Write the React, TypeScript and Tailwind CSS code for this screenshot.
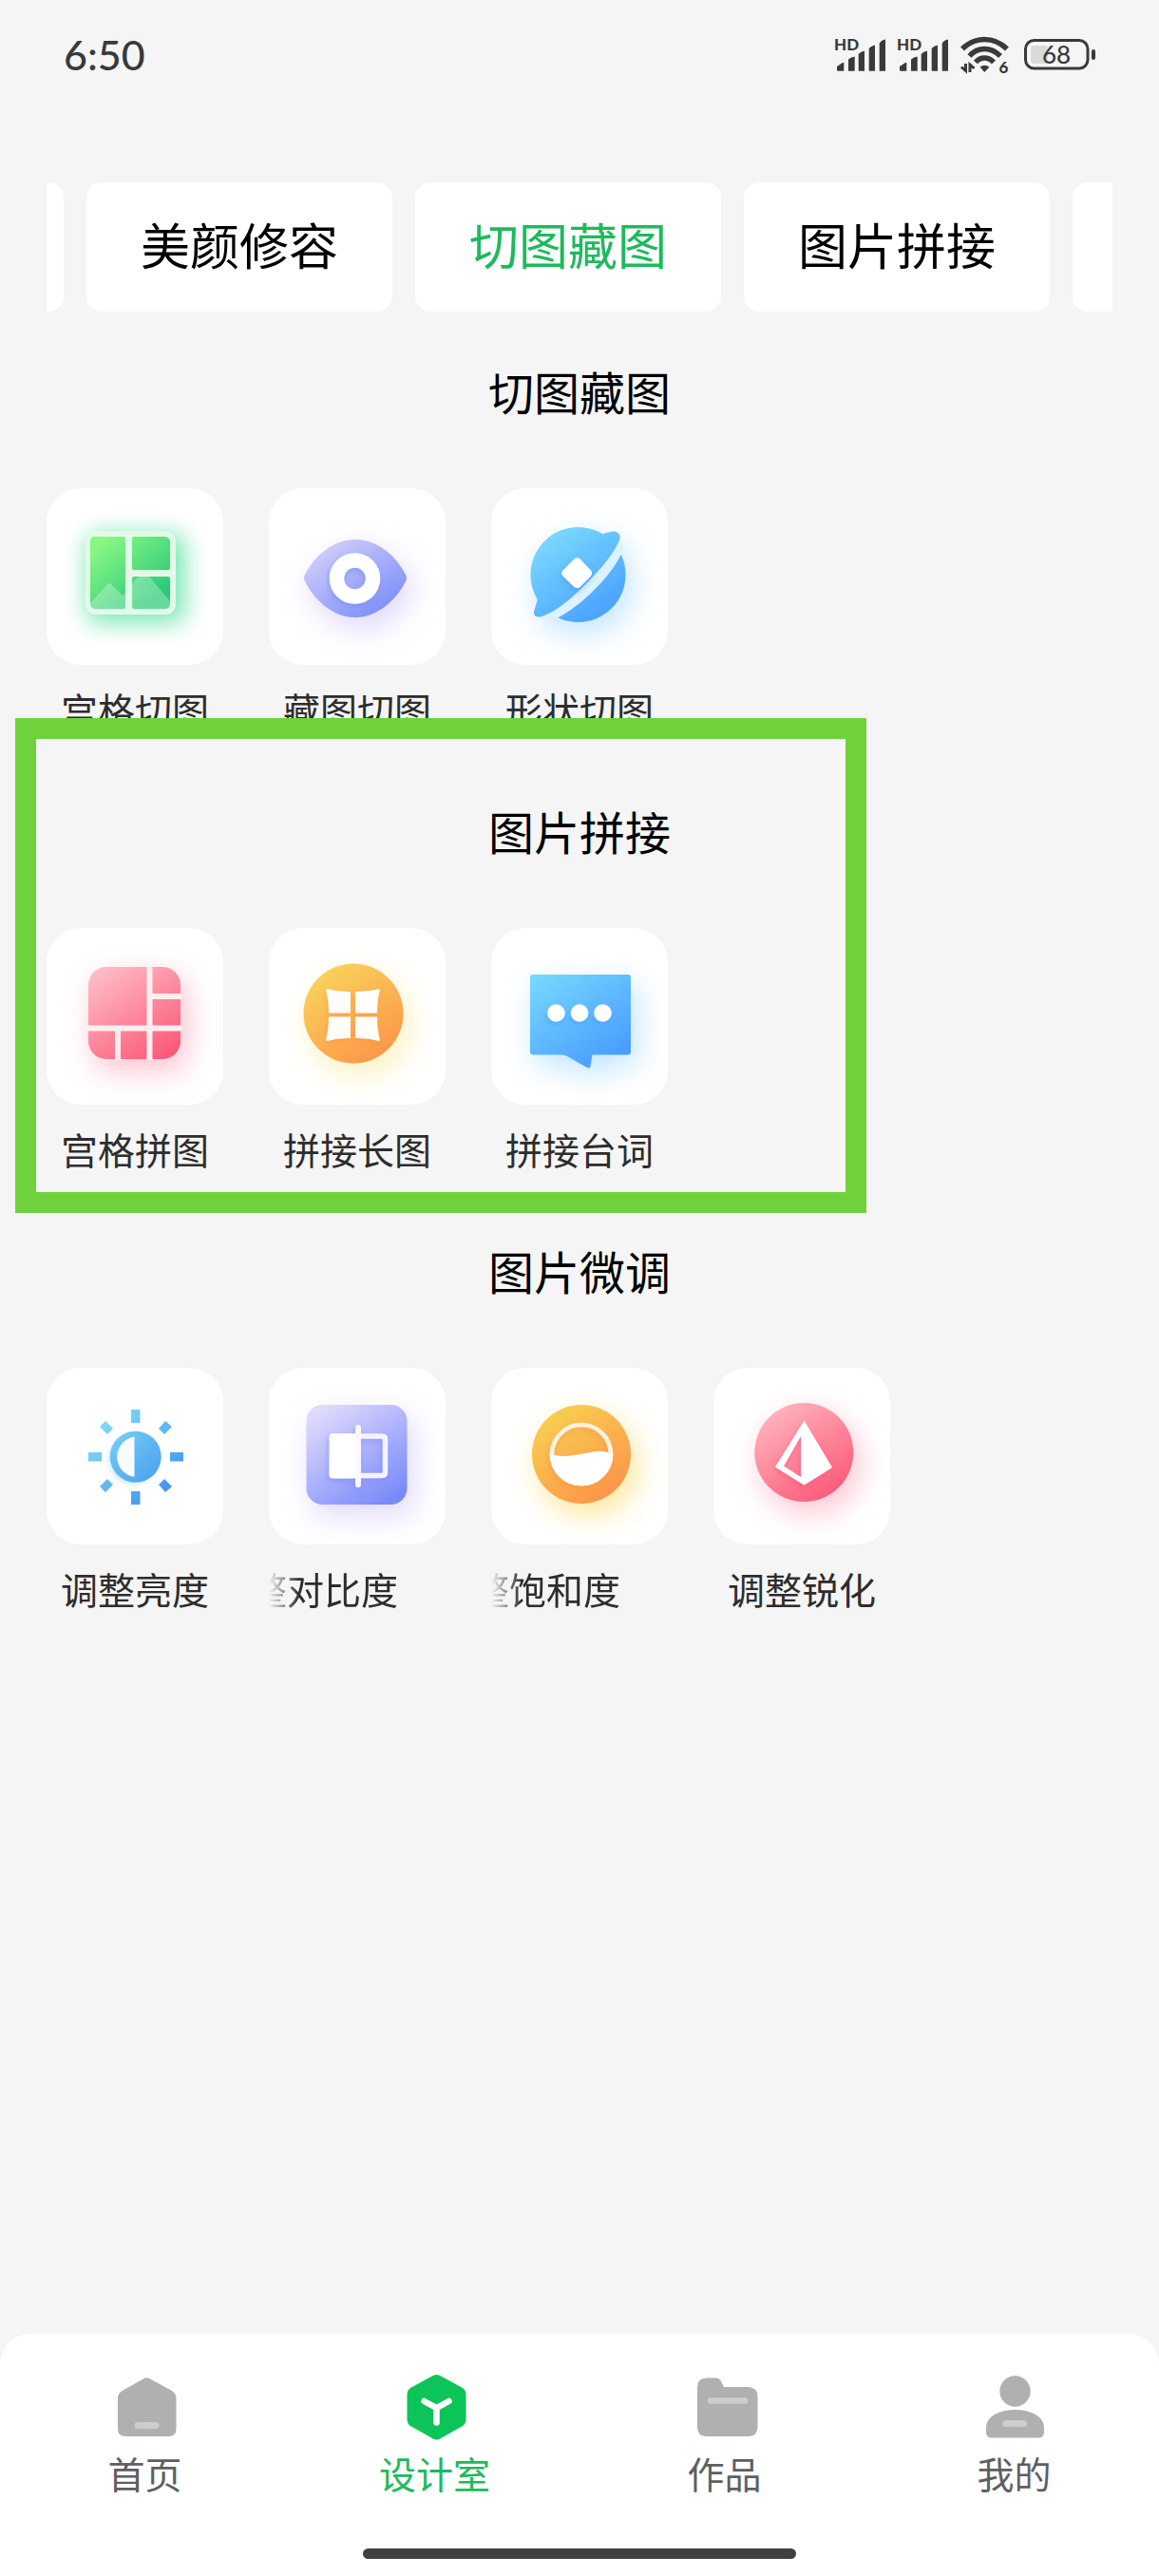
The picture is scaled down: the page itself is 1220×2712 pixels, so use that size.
import { useLayoutEffect, useRef, useState } from 'react';
import type { ReactNode } from 'react';

interface Tool {
  label: string;
  icon: ReactNode;
}

interface Section {
  title: string;
  tools: Tool[];
  highlighted?: boolean;
}

const TABS = ['图片美化', '美颜修容', '切图藏图', '图片拼接', '图片微调'];
const TAB_SCROLL = 304;

const MAX_LABEL = 4;

// --- Tool icons (drawn on a 186 x 186 tile) ---

interface GlowIconProps {
  id: string;
  from: string;
  to: string;
  glow: string;
  glowOpacity?: number;
  shape: ReactNode;
  children?: ReactNode;
}

/** Gradient shape with a soft coloured glow below and to the right of it */
function GlowIcon({ id, from, to, glow, glowOpacity = 0.55, shape, children }: GlowIconProps) {
  return (
    <svg viewBox="0 0 186 186" className="block size-full" aria-hidden="true">
      <defs>
        <linearGradient id={`${id}-fill`} gradientUnits="userSpaceOnUse" x1="56" y1="44" x2="124" y2="142">
          <stop offset="0" stopColor={from} />
          <stop offset="1" stopColor={to} />
        </linearGradient>
        <filter id={`${id}-blur`} x="-60%" y="-60%" width="220%" height="220%">
          <feGaussianBlur stdDeviation="16" />
        </filter>
        <filter id={`${id}-shade`} x="-30%" y="-30%" width="160%" height="160%">
          <feDropShadow dx="-1" dy="3" stdDeviation="3" floodColor={to} floodOpacity="0.6" />
        </filter>
      </defs>
      <g fill={glow} opacity={glowOpacity} transform="translate(7 12)" filter={`url(#${id}-blur)`}>
        {shape}
      </g>
      <g fill={`url(#${id}-fill)`}>{shape}</g>
      {children}
    </svg>
  );
}

function GridCutIcon() {
  return (
    <svg viewBox="0 0 186 186" className="block size-full" aria-hidden="true">
      <defs>
        <linearGradient id="cut-fill" gradientUnits="userSpaceOnUse" x1="60" y1="56" x2="112" y2="118">
          <stop offset="0" stopColor="#8af684" />
          <stop offset="1" stopColor="#2bca79" />
        </linearGradient>
        <filter id="cut-blur" x="-50%" y="-50%" width="200%" height="200%">
          <feGaussianBlur stdDeviation="12" />
        </filter>
      </defs>
      <rect x="42" y="48" width="104" height="94" rx="12" fill="#35dc8c" opacity="0.66" filter="url(#cut-blur)" />
      <rect x="41" y="45" width="95" height="88" rx="11" fill="#e2fbe9" />
      <g fill="url(#cut-fill)">
        <path d="M51 51H81Q83 51 83 53V125Q83 127 81 127H52Q46 127 46 121V56Q46 51 51 51Z" />
        <path d="M92 51H124Q130 51 130 57V84Q130 86 128 86H92Q90 86 90 84V53Q90 51 92 51Z" />
        <path d="M92 93H128Q130 93 130 95V121Q130 127 124 127H92Q90 127 90 125V95Q90 93 92 93Z" />
      </g>
      <g fill="#ffffff" opacity="0.28">
        <path d="M46 121L64 101Q66 99 68 101L79 112Q81 113 83 110V125Q83 127 81 127H52Q46 127 46 121Z" />
        <path d="M90 100L97 93H108L130 119V121Q130 127 124 127H92Q90 127 90 125Z" />
      </g>
    </svg>
  );
}

function EyeIcon() {
  return (
    <GlowIcon
      id="eye"
      from="#dcd7fb"
      to="#7588f8"
      glow="#c6b6fb"
      shape={<path d="M38 98Q36 95 38 91C48 71 68 54 91 54S134 71 144 91Q146 95 144 98C134 118 114 136 91 136S48 118 38 98Z" />}
    >
      <circle cx="90.500" cy="95" r="19" fill="none" stroke="#ffffff" strokeWidth="15.500" filter="url(#eye-shade)" />
    </GlowIcon>
  );
}

function PlanetIcon() {
  return (
    <GlowIcon
      id="planet"
      from="#7ddcff"
      to="#459cff"
      glow="#8fd0ff"
      shape={
        <>
          <circle cx="91.500" cy="91" r="50" />
          <path d="M116 49Q124 45 130 45.500Q137 47 135.500 54C131 68 119 81 106 94.500S74 128 52 135.500Q44 136 45 130L50 113Z" />
        </>
      }
    >
      <path
        d="M136 52C131 66 119 81 106 94.300S74 128 51 136.500L69 137C84 129 95 120 105 110.500S131 84 139 65Z"
        fill="#ddf2ff"
      />
      <path
        d="M87.500 74.500Q90.500 72 93.500 74.500L105 86.500Q107 89.500 105 92.500L93.500 104Q90.500 106 87.500 104L75.500 92.500Q73 89.500 75.500 86.500Z"
        fill="#ffffff"
        filter="url(#planet-shade)"
      />
    </GlowIcon>
  );
}

function GridJoinIcon() {
  return (
    <GlowIcon
      id="join"
      from="#ffbcc6"
      to="#fa5675"
      glow="#ff8fa6"
      shape={<rect x="44" y="41" width="97" height="97" rx="19" />}
    >
      <path d="M108.500 40V139M43 105.500H142M108.500 72H142M75 105.500V139" stroke="#ffeef1" strokeWidth="6" fill="none" />
    </GlowIcon>
  );
}

function LongImageIcon() {
  const pane = 'M61 64Q73 67.500 86 67V89.500H63Q63 76 60 65Z';
  return (
    <GlowIcon
      id="long"
      from="#f9d35c"
      to="#fd9347"
      glow="#ffe68a"
      shape={<circle cx="89" cy="90" r="52.500" />}
    >
      <g fill="#fffefa" filter="url(#long-shade)">
        <path d={pane} />
        <path d={pane} transform="matrix(-1 0 0 1 177 0)" />
        <path d={pane} transform="matrix(1 0 0 -1 0 183)" />
        <path d={pane} transform="matrix(-1 0 0 -1 177 183)" />
      </g>
    </GlowIcon>
  );
}

function CaptionIcon() {
  return (
    <GlowIcon
      id="caption"
      from="#78d8fe"
      to="#489dff"
      glow="#8fd0ff"
      shape={
        <path d="M44 49H144Q147 49 147 52V130Q147 133.500 144 133.500H106.500L104.500 146Q104 148 101 147L80 135Q78 133.500 74 133.500H44Q41 133.500 41 130V52Q41 49 44 49Z" />
      }
    >
      <g fill="#ffffff" filter="url(#caption-shade)">
        <circle cx="68.500" cy="89.500" r="9.300" />
        <circle cx="93" cy="89.500" r="9.300" />
        <circle cx="117.500" cy="89.500" r="9.300" />
      </g>
    </GlowIcon>
  );
}

function BrightnessIcon() {
  return (
    <svg viewBox="0 0 186 186" className="block size-full" aria-hidden="true">
      <defs>
        <linearGradient id="sun-fill" gradientUnits="userSpaceOnUse" x1="58" y1="58" x2="130" y2="130">
          <stop offset="0" stopColor="#80d9f6" />
          <stop offset="1" stopColor="#4095ec" />
        </linearGradient>
        <filter id="sun-blur" x="-30%" y="-30%" width="160%" height="160%">
          <feGaussianBlur stdDeviation="3" />
        </filter>
      </defs>
      <circle cx="91" cy="97" r="25" fill="#8ccbfa" opacity="0.5" filter="url(#sun-blur)" />
      <circle cx="93.700" cy="93.700" r="27" fill="url(#sun-fill)" />
      <path d="M92.500 72.500A21.500 21.500 0 0 0 92.500 115Z" fill="#f8fcff" />
      <g fill="url(#sun-fill)">
        <path d="M89 44H98.500V58H89ZM89 130H98.500V144H89ZM44 89H58V98.500H44ZM130 89H144V98.500H130Z" />
        <path d="M62 56L70 64L64 70L56 62ZM125 56L132 62L124 70L118 64ZM62 131L70 123L64 117L56 125ZM125 131L132 125L124 117L118 123Z" />
      </g>
    </svg>
  );
}

function ContrastIcon() {
  return (
    <GlowIcon
      id="contrast"
      from="#dfdafc"
      to="#7a8afa"
      glow="#b3a6fb"
      glowOpacity={0.42}
      shape={<rect x="39.500" y="39" width="106" height="105" rx="17" />}
    >
      <g filter="url(#contrast-shade)">
        <rect x="63.500" y="69" width="31" height="47.500" rx="4" fill="#ffffff" />
        <path d="M95 72H119Q122.500 72 122.500 75.500V110Q122.500 113.500 119 113.500H95" fill="none" stroke="#f4f3ff" strokeWidth="5.500" />
        <path d="M94 63V123" stroke="#f9f8ff" strokeWidth="6" strokeLinecap="round" />
      </g>
    </GlowIcon>
  );
}

function SaturationIcon() {
  return (
    <GlowIcon
      id="saturation"
      from="#f8d251"
      to="#fc934a"
      glow="#ffda62"
      glowOpacity={0.65}
      shape={<circle cx="95" cy="91" r="52" />}
    >
      <g filter="url(#saturation-shade)">
        <circle cx="95" cy="91" r="31" fill="none" stroke="#fff2db" strokeWidth="4.700" />
        <path d="M61.700 91Q74 94.500 88 92T110 88T128.300 91A33.300 33.300 0 0 1 61.700 91Z" fill="#ffffff" />
      </g>
    </GlowIcon>
  );
}

function SharpenIcon() {
  return (
    <GlowIcon
      id="sharpen"
      from="#ffb6bf"
      to="#fd5676"
      glow="#ff94ab"
      shape={<circle cx="95.300" cy="89" r="52" />}
    >
      <path
        d="M95.500 55.500L125 105L95.500 123.500L65 104.500ZM92 72L74 103.500L92 115Z"
        fill="#ffffff"
        fillRule="evenodd"
        filter="url(#sharpen-shade)"
      />
    </GlowIcon>
  );
}

const SECTIONS: Section[] = [
  {
    title: '切图藏图',
    tools: [
      { label: '宫格切图', icon: <GridCutIcon /> },
      { label: '藏图切图', icon: <EyeIcon /> },
      { label: '形状切图', icon: <PlanetIcon /> },
    ],
  },
  {
    title: '图片拼接',
    highlighted: true,
    tools: [
      { label: '宫格拼图', icon: <GridJoinIcon /> },
      { label: '拼接长图', icon: <LongImageIcon /> },
      { label: '拼接台词', icon: <CaptionIcon /> },
    ],
  },
  {
    title: '图片微调',
    tools: [
      { label: '调整亮度', icon: <BrightnessIcon /> },
      { label: '调整对比度', icon: <ContrastIcon /> },
      { label: '调整饱和度', icon: <SaturationIcon /> },
      { label: '调整锐化', icon: <SharpenIcon /> },
    ],
  },
];

// --- Bottom navigation ---

const NAV_ITEMS = [
  {
    label: '首页',
    icon: (
      <>
        <path
          d="M31 5Q35.500 1.500 40 5L62 17Q66.500 20 66.500 25V57Q66.500 65 58.500 65H13Q5 65 5 57V25Q5 20 9.500 17Z"
          fill="#b0b0b0"
        />
        <path d="M26 53.500H45" stroke="#cdcdcd" strokeWidth="7" strokeLinecap="round" />
      </>
    ),
  },
  {
    label: '设计室',
    icon: (
      <>
        <path
          d="M31 1.500Q35.500 -1.500 40 1.500L63 14Q66.500 16.500 66.500 21V47Q66.500 51.500 63 54L40 67Q35.500 70 31 67L8 54Q4.500 51.500 4.500 47V21Q4.500 16.500 8 14Z"
          fill="#0cc458"
        />
        <path d="M22.500 28L35.500 35L48.500 28M35.500 35V50.500" fill="none" stroke="#ffffff" strokeWidth="6.500" strokeLinecap="round" />
      </>
    ),
  },
  {
    label: '作品',
    icon: (
      <>
        <path
          d="M15 3.500H25Q28 3.500 29.500 6L33 13H58Q68.500 13 68.500 23V55Q68.500 65 58 65H15Q5 65 5 55V13.500Q5 3.500 15 3.500Z"
          fill="#b0b0b0"
        />
        <path d="M19 27.500H55" stroke="#cdcdcd" strokeWidth="6.500" strokeLinecap="round" />
      </>
    ),
  },
  {
    label: '我的',
    icon: (
      <>
        <circle cx="34.500" cy="17.500" r="16.200" fill="#b0b0b0" />
        <path
          d="M4 56C4 44 18 37 34.500 37S65 44 65 56V60.500Q65 66.500 59 66.500H10Q4 66.500 4 60.500Z"
          fill="#b0b0b0"
        />
        <path d="M25 51.500H43.500" stroke="#cdcdcd" strokeWidth="7" strokeLinecap="round" />
      </>
    ),
  },
];

// --- Status bar ---

function SignalIcon() {
  return (
    <svg viewBox="0 0 54 44" className="h-11 w-[54px] overflow-visible" fill="#3a3a3a" aria-hidden="true">
      <text x="-1" y="17.300" fontSize="17" fontWeight="900" fontFamily="Lato, sans-serif">
        HD
      </text>
      <path d="M2 34L8 30H9.300V38.700H3Q2 38.700 2 37.700ZM14 26.500Q17 24 20.700 23.500V38.700H14ZM24.700 21Q27 18 31 17.500V38.700H24.700ZM35.700 15Q38 12 42 11.500V38.700H35.700ZM46.700 9.500Q49 6 53 5.500V38.700H46.700Z" />
    </svg>
  );
}

function WifiIcon() {
  return (
    <svg viewBox="0 0 54 44" className="h-11 w-[54px] overflow-visible" fill="none" stroke="#3a3a3a" aria-hidden="true">
      <path d="M2 15.500Q12 5.500 25.300 5.500T49 15.500" strokeWidth="5.500" />
      <path d="M9.500 23Q16 15.500 25.300 15.500T42 23" strokeWidth="5.500" />
      <path d="M16 29.500Q20 25 25.300 25T35 29.500" strokeWidth="5.500" />
      <path d="M20.500 34.500Q25.300 31 30.500 34.500L25.300 40Z" fill="#3a3a3a" stroke="none" />
      <path d="M1 34.500L5.500 38.500V31M10 40V32L14.500 36" strokeWidth="3" />
      <text x="40.500" y="40.500" fontSize="17" fontWeight="900" fontFamily="Lato, sans-serif" fill="#3a3a3a" stroke="none">
        6
      </text>
    </svg>
  );
}

function BatteryIcon() {
  return (
    <svg viewBox="0 0 76 44" className="h-11 w-[76px]" aria-hidden="true">
      <rect x="8" y="12" width="18" height="19" rx="3" fill="#dadada" />
      <rect x="2.500" y="6.500" width="65.500" height="29.500" rx="9" fill="none" stroke="#3a3a3a" strokeWidth="3" />
      <rect x="72" y="16" width="4" height="11" rx="2" fill="#3a3a3a" />
      <text x="35" y="30.500" textAnchor="middle" fontSize="26" fontWeight="500" fontFamily="Lato, sans-serif" fill="#3a3a3a">
        68
      </text>
    </svg>
  );
}

function StatusBar() {
  return (
    <header className="flex h-[116px] items-center justify-between px-[67px]">
      <time className="font-[Lato,sans-serif] text-[43px] leading-[56px] font-medium text-[#3a3a3a]">6:50</time>
      <div className="flex items-center gap-3">
        <SignalIcon />
        <SignalIcon />
        <WifiIcon />
        <BatteryIcon />
      </div>
    </header>
  );
}

function ToolButton({ label, icon }: Tool) {
  const scrolling = label.length > MAX_LABEL;
  return (
    <button type="button" className="flex w-[186px] flex-col gap-[18px]">
      <span className="block size-[186px] overflow-hidden rounded-[36px] bg-white">{icon}</span>
      <span
        className={`block w-full text-[39px] leading-[56px] whitespace-nowrap text-[#2d2d2d] ${
          scrolling
            ? 'overflow-hidden text-left -indent-[59px] [mask-image:linear-gradient(to_right,transparent,black_32px)]'
            : 'text-center'
        }`}
      >
        {label}
      </span>
    </button>
  );
}

export default function App() {
  const [activeTab, setActiveTab] = useState('切图藏图');
  const [activeNav, setActiveNav] = useState('设计室');
  const tabsRef = useRef<HTMLDivElement>(null);

  useLayoutEffect(() => {
    if (tabsRef.current) tabsRef.current.scrollLeft = TAB_SCROLL;
  }, []);

  return (
    <div className="flex min-h-screen flex-col bg-[#f5f5f5] font-['Noto_Sans_CJK_SC',sans-serif]">
      <StatusBar />

      <div ref={tabsRef} className="mx-[49px] mt-[76px] flex gap-6 overflow-x-auto [scrollbar-width:none]">
        {TABS.map((tab) => (
          <button
            key={tab}
            type="button"
            onClick={() => setActiveTab(tab)}
            className={`h-[136px] w-[322px] shrink-0 rounded-2xl bg-white pb-1.5 text-[52px] leading-[72px] ${
              tab === activeTab ? 'text-[#1dba5c]' : 'text-black'
            }`}
          >
            {tab}
          </button>
        ))}
      </div>

      <main className="mt-[50px] flex flex-col gap-[67px] pb-16">
        {SECTIONS.map((section) => (
          <section key={section.title} className="relative px-[49px]">
            <h2 className="text-center text-[48px] leading-[66px] font-normal text-black">{section.title}</h2>
            <div className="mt-[70px] flex flex-wrap gap-12">
              {section.tools.map((tool) => (
                <ToolButton key={tool.label} {...tool} />
              ))}
            </div>
            {section.highlighted && (
              <div className="pointer-events-none absolute -top-[85px] left-4 h-[521px] w-[896px] border-[22px] border-[#70d23b]" />
            )}
          </section>
        ))}
      </main>

      <footer className="mt-auto rounded-t-[32px] bg-white pt-[43px] pb-[18px]">
        <nav className="grid grid-cols-4">
          {NAV_ITEMS.map((item) => (
            <button
              key={item.label}
              type="button"
              onClick={() => setActiveNav(item.label)}
              className={`flex flex-col items-center gap-[10px] text-[39px] leading-[50px] ${
                item.label === activeNav ? 'text-[#1dba5c]' : 'text-[#5f5f5f]'
              }`}
            >
              <svg viewBox="0 0 68 68" className="size-[68px] overflow-visible" aria-hidden="true">
                {item.icon}
              </svg>
              {item.label}
            </button>
          ))}
        </nav>
        <div className="mx-auto mt-[55px] h-[11px] w-[456px] rounded-full bg-[#404040]" />
      </footer>
    </div>
  );
}
